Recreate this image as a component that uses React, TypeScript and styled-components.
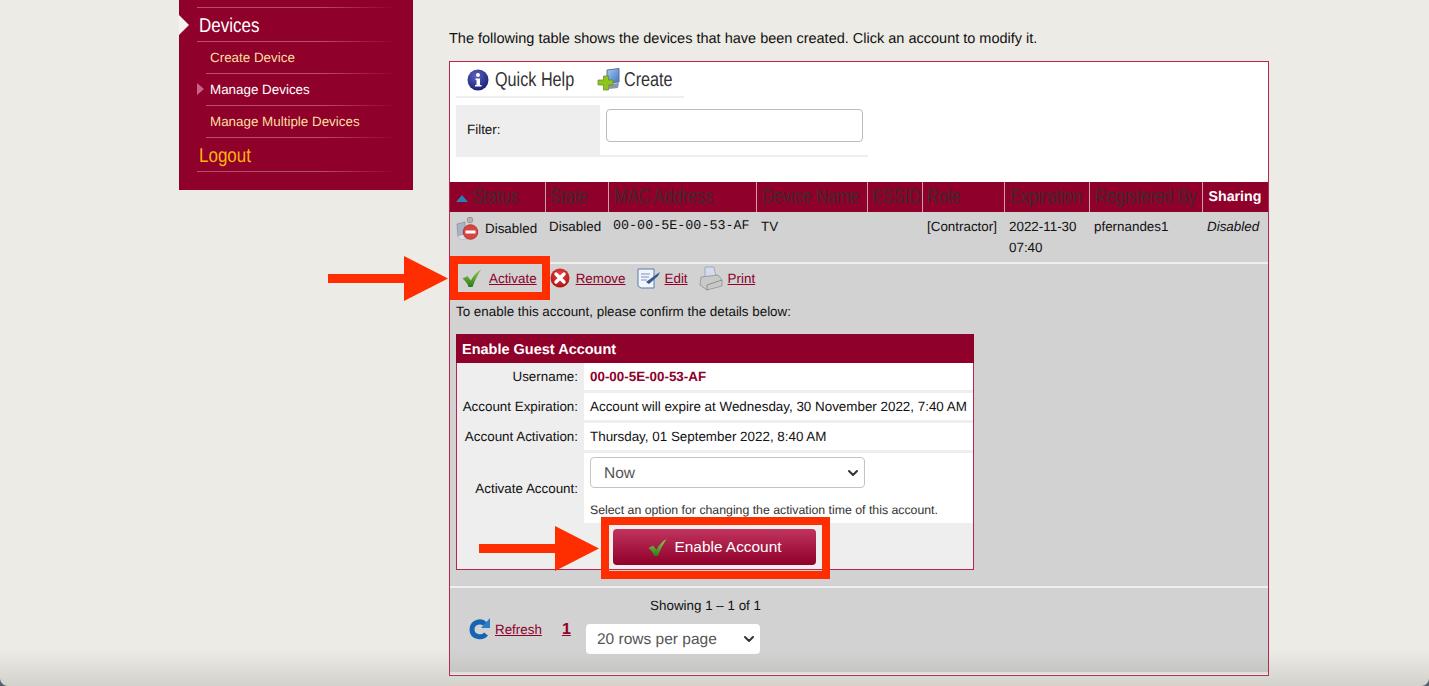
import React from "react";
import styled, { createGlobalStyle } from "styled-components";
import { ChevronDown } from "lucide-react";

const maroon = "#8f002a";
const sans = `"Liberation Sans", Arial, sans-serif`;

const Global = createGlobalStyle`
  html, body { margin: 0; padding: 0; height: 686px; overflow: hidden; background: #ecebe6; }
  body { font-family: ${sans}; font-size: 13.4px; color: #111; text-rendering: geometricPrecision; }
  * { box-sizing: border-box; }
`;

const Page = styled.div`
  position: relative; width: 1429px; height: 686px; overflow: hidden;
  display: flex; align-items: flex-start; padding-left: 179px;
`;
const BottomShade = styled.div`
  position: absolute; left: 0; right: 0; bottom: 0; height: 36px; pointer-events: none;
  background: linear-gradient(to bottom, rgba(120,118,105,0), rgba(120,118,105,.22));
`;
const Corner = styled.div<{ $right?: boolean }>`
  position: absolute; bottom: 0; ${p => (p.$right ? "right: 0" : "left: 0")}; width: 8px; height: 8px;
  background: radial-gradient(circle at ${p => (p.$right ? "0 0" : "100% 0")}, transparent 7.5px, #55606a 8.5px);
`;

/* Condensed display type: the layout box has the narrow width, the glyphs are squeezed to fit it */
const NarrowBox = styled.span<{ $w: number }>`
  display: inline-block; width: ${p => p.$w}px; white-space: nowrap; vertical-align: baseline;
`;
const NarrowInk = styled.span<{ $scale: number }>`
  display: inline-block; transform: scaleX(${p => p.$scale}); transform-origin: 0 50%;
`;
const Narrow = ({ w, scale, children }: { w: number; scale: number; children: React.ReactNode }) => (
  <NarrowBox $w={w}><NarrowInk $scale={scale}>{children}</NarrowInk></NarrowBox>
);

/* Sidebar */
const Side = styled.nav`
  width: 234px; height: 190px; flex: none; background: ${maroon}; position: relative;
  padding-top: 7px; display: flex; flex-direction: column;
`;
const Rule = styled.div<{ $sub?: boolean }>`
  height: 1px; margin-left: ${p => (p.$sub ? 27 : 18)}px; margin-right: 16px;
  background: linear-gradient(to right, #b8506c 0, #b8506c 60%, rgba(184,80,108,0) 100%);
`;
const Notch = styled.div`
  position: absolute; left: 0; top: 15px; width: 0; height: 0;
  border-left: 10px solid #f4f3f0; border-top: 10.5px solid transparent; border-bottom: 10.5px solid transparent;
`;
const SectionLink = styled.a<{ $gold?: boolean }>`
  display: flex; align-items: center; height: 33px; padding: 3px 0 0 20px;
  font-size: 20px; color: ${p => (p.$gold ? "#ffb40f" : "#fff")};
`;
const SubLink = styled.a<{ $active?: boolean }>`
  position: relative; display: flex; align-items: center; height: 31px; padding: 0 0 1px 31px;
  font-size: 13.4px; color: ${p => (p.$active ? "#fff" : "#fbdf9f")};
`;
const ActiveMark = styled.span`
  position: absolute; left: 18px; top: 9px; width: 0; height: 0;
  border-left: 7px solid #c8628a; border-top: 6.5px solid transparent; border-bottom: 6.5px solid transparent;
`;

/* Main */
const Main = styled.main`
  margin-left: 36px; width: 820px; padding-top: 31px; flex: none;
`;
const Intro = styled.p`
  margin: 0 0 13px; font-size: 14.5px; line-height: 17px; color: #111; white-space: nowrap;
`;
const Panel = styled.section`
  border: 1px solid #b8254f; background: #fff; height: 615px; display: flex; flex-direction: column;
`;
const Top = styled.div`
  height: 120px; padding: 6px 0 0 6px; flex: none;
`;
const Tools = styled.div`
  width: 228px; height: 30px; padding-left: 11px; border-bottom: 2px solid #eee;
  display: flex; align-items: flex-start; gap: 24px;
`;
const Tool = styled.a<{ $gap: number }>`
  display: flex; align-items: center; gap: ${p => p.$gap}px; height: 24px;
  font-size: 20px; color: #333;
`;
const FilterRow = styled.div`
  margin-top: 7px; width: 412px; height: 52px; display: flex; border-bottom: 2px solid #eee;
`;
const FilterLabel = styled.label`
  width: 144px; background: #eee; padding: 16px 0 0 11px; font-size: 13.4px; line-height: 17px;
`;
const FilterInput = styled.input`
  margin: 4px 0 0 6px; width: 257px; height: 33px; background: #fff;
  border: 1px solid #bbb; border-radius: 4px; outline: none;
`;

const Table = styled.table`
  width: 818px; table-layout: fixed; border-collapse: collapse; flex: none;
`;
const Th = styled.th<{ $w: number; $white?: boolean; $pad: number }>`
  width: ${p => p.$w}px; height: 30px; padding: 0 0 0 ${p => p.$pad}px; background: ${maroon}; text-align: left; white-space: nowrap;
  border-right: 1px solid #c9a0ab; font-weight: ${p => (p.$white ? 700 : 400)};
  font-size: ${p => (p.$white ? 14.2 : 20.5)}px;
  color: ${p => (p.$white ? "#fff" : "#40282c")};
  &:last-child { border-right: none; }
`;
const SortMark = styled.span`
  display: inline-block; width: 0; height: 0; margin-right: 5px; vertical-align: 1px;
  border-left: 6px solid transparent; border-right: 6px solid transparent; border-bottom: 7px solid #2a7fb5;
`;
const Td = styled.td<{ $mono?: boolean; $italic?: boolean; $pad?: number }>`
  height: 50px; padding: 4px 0 0 ${p => p.$pad ?? 5}px; vertical-align: top; line-height: 21px; background: #d2d2d2;
  font-family: ${p => (p.$mono ? `"Liberation Mono", monospace` : sans)};
  font-size: 13.4px; font-style: ${p => (p.$italic ? "italic" : "normal")};
`;
const StatusCell = styled.div`
  display: flex; align-items: center; gap: 6px; margin: 1px 0 0 1px; font-size: 13.4px;
`;
const Detail = styled.div`
  height: 326px; flex: none; background: #d2d2d2; border-top: 2px solid #efefef; border-bottom: 2px solid #efefef;
  padding: 0 0 0 6px;
`;
const Actions = styled.div`
  height: 30px; margin-top: -1px; padding-left: 6px; display: flex; align-items: center; font-size: 13.4px;
`;
const Action = styled.a<{ $gap: number; $after: number }>`
  display: flex; align-items: center; gap: ${p => p.$gap}px; margin-right: ${p => p.$after}px;
`;
const Link = styled.span`
  color: ${maroon}; text-decoration: underline;
`;
const Note = styled.p`
  margin: 10px 0 14px; font-size: 13.4px; line-height: 17px;
`;
const FormBox = styled.div`
  width: 518px; height: 236px; border: 1px solid #b8254f; background: #eee;
`;
const FormHead = styled.div`
  height: 29px; margin: -1px -1px 0; background: ${maroon}; color: #fff; font-weight: 700; font-size: 14.5px;
  display: flex; align-items: center; padding: 3px 0 0 6px;
`;
const FormRow = styled.div<{ $h: number; $gap?: boolean }>`
  display: grid; grid-template-columns: 127px 1fr; height: ${p => p.$h}px; margin-bottom: ${p => (p.$gap ? 3 : 0)}px;
`;
const FormLabel = styled.div`
  align-self: center; text-align: right; padding-right: 6px; font-size: 13.4px; white-space: nowrap;
`;
const FormValue = styled.div<{ $bold?: boolean }>`
  background: #fff; padding-left: 6px; display: flex; align-items: center; font-size: 13.4px; white-space: nowrap;
  color: ${p => (p.$bold ? maroon : "#111")}; font-weight: ${p => (p.$bold ? 700 : 400)};
`;
const SelectStack = styled.div`
  background: #fff; padding: 4px 0 0 6px;
`;
const SelectBox = styled.div<{ $w: number; $h: number; $plain?: boolean }>`
  position: relative; width: ${p => p.$w}px; height: ${p => p.$h}px; background: #fff; border-radius: 4px;
  border: ${p => (p.$plain ? "none" : "1px solid #c4c4c4")};
  display: flex; align-items: center; padding: 2px 0 0 ${p => (p.$plain ? 11 : 13)}px; font-size: 15.5px; color: #555;
`;
const Caret = styled(ChevronDown)`
  position: absolute; right: 3px; top: 50%; margin-top: -8px; color: #333; stroke-width: 3;
`;
const Help = styled.div`
  margin-top: 14px; font-size: 12.3px; line-height: 16px; color: #333; white-space: nowrap;
`;
const ButtonRow = styled.div`
  display: flex; padding: 6px 0 0 156px;
`;
const EnableButton = styled.button`
  width: 203px; height: 36px; border: none; border-radius: 4px; color: #fff; font-family: ${sans}; font-size: 15.4px;
  background: linear-gradient(to bottom, #c0345e, #8f002a); padding: 0;
  display: flex; align-items: center; justify-content: center; gap: 8px;
`;
const Pager = styled.div`
  flex: 1; background: #d2d2d2; border-bottom: 2px solid #efefef; margin-bottom: 1px;
  display: grid; grid-template-columns: 136px 175px; grid-template-rows: 36px 1fr;
`;
const Showing = styled.div`
  grid-column: 2; justify-self: end; padding: 9px 0 0 0; font-size: 13.4px; line-height: 17px; white-space: nowrap;
`;
const PagerLeft = styled.div`
  grid-row: 1 / span 2; grid-column: 1; display: flex; align-items: flex-start; padding: 29px 0 0 18px;
`;
const RefreshLink = styled.a`
  display: flex; align-items: center; gap: 4px; margin-right: 20px; font-size: 13.4px;
`;
const PageNum = styled.a`
  font-weight: 700; font-size: 16px; color: ${maroon}; text-decoration: underline; line-height: 24px; margin-top: 1px;
`;

/* Annotations drawn over the page */
const Callout = styled.div<{ $x: number; $y: number; $w: number; $h: number }>`
  position: absolute; left: ${p => p.$x}px; top: ${p => p.$y}px; width: ${p => p.$w}px; height: ${p => p.$h}px;
  border: 8px solid #ff2e00; pointer-events: none;
`;
const ArrowMark = styled.svg<{ $x: number; $y: number }>`
  position: absolute; left: ${p => p.$x}px; top: ${p => p.$y}px;
`;

const Arrow = ({ x, y }: { x: number; y: number }) => (
  <ArrowMark $x={x} $y={y} width="120" height="45" viewBox="0 0 120 45">
    <path d="M0 18H76V0L120 22.500L76 45V27H0Z" fill="#ff2e00" />
  </ArrowMark>
);

const Check = ({ s = 20 }: { s?: number }) => (
  <svg width={s} height={s} viewBox="0 0 20 20">
    <defs><linearGradient id="ck" x1="0" y1="0" x2="0" y2="1"><stop offset="0" stopColor="#8fd14f" /><stop offset="1" stopColor="#2a7a1c" /></linearGradient></defs>
    <path d="M0.500 10.500L5.500 8L8.800 12.500C11 8 15 3.500 19.500 1C16 6.500 12.500 13 10.500 19H6.500C5.500 15.500 3.500 13 0.500 10.500Z" fill="url(#ck)" />
  </svg>
);
const InfoIcon = () => (
  <svg width="22" height="22" viewBox="0 0 22 22">
    <defs><radialGradient id="inf" cx=".4" cy=".3" r=".8"><stop offset="0" stopColor="#5a64c0" /><stop offset="1" stopColor="#16186e" /></radialGradient></defs>
    <circle cx="11" cy="11" r="10.500" fill="url(#inf)" />
    <circle cx="11" cy="6" r="2" fill="#fff" />
    <path d="M8.500 9.500H13V16H14.500V17.500H8V16H9.500V11H8.500Z" fill="#fff" />
  </svg>
);
const CreateIcon = () => (
  <svg width="24" height="24" viewBox="0 0 24 24">
    <defs><linearGradient id="scr" x1="0" y1="0" x2="1" y2="1"><stop offset="0" stopColor="#a9cdf2" /><stop offset="1" stopColor="#3f74c0" /></linearGradient></defs>
    <path d="M10 2L22 0.500V14L10 15Z" fill="url(#scr)" stroke="#5a6f95" />
    <path d="M12 16L22 15L21 20L12 21Z" fill="#8a95b0" />
    <path d="M6.500 8H11.500V12H16V17H11.500V22H6.500V17H1V12H6.500Z" fill="#8fc31f" stroke="#5f8a1a" strokeWidth=".7" />
  </svg>
);
const DisabledIcon = () => (
  <svg width="23" height="23" viewBox="0 0 23 23">
    <path d="M1 7L9 5V17L2 19Z" fill="#aab3c6" stroke="#7b8090" strokeWidth=".6" />
    <circle cx="14" cy="3" r="2.800" fill="#c0b0b0" stroke="#777" strokeWidth=".6" />
    <path d="M1 19L9 17L14 21L5 23Z" fill="#dcdce2" stroke="#999" strokeWidth=".4" />
    <circle cx="14.500" cy="15" r="7.300" fill="#d8443e" stroke="#a82a28" strokeWidth=".8" />
    <rect x="9.500" y="13.500" width="10" height="3" fill="#fff" />
  </svg>
);
const RemoveIcon = () => (
  <svg width="20" height="20" viewBox="0 0 20 20">
    <defs><radialGradient id="rm" cx=".5" cy=".35" r=".7"><stop offset="0" stopColor="#e84a3f" /><stop offset="1" stopColor="#a80f10" /></radialGradient></defs>
    <circle cx="10" cy="10" r="9.500" fill="url(#rm)" />
    <path d="M6 6L14 14M14 6L6 14" stroke="#fff" strokeWidth="3.400" strokeLinecap="round" />
  </svg>
);
const EditIcon = () => (
  <svg width="24" height="24" viewBox="0 0 24 24">
    <path d="M1 3H17V22H4L1 20Z" fill="#f2f5fb" stroke="#5c7ba8" />
    <path d="M4 8H13M4 11H12M4 14H10" stroke="#7a93bb" strokeWidth="1.200" />
    <path d="M9 16L20 8L23 6L21 10L12 18Z" fill="#34588f" />
  </svg>
);
const PrintIcon = () => (
  <svg width="24" height="25" viewBox="0 0 24 25">
    <path d="M6 1H15L17 11H6Z" fill="#d4dcec" stroke="#8e99ae" strokeWidth=".7" />
    <path d="M2 11L19 9L23 14V20L8 24L1 19Z" fill="#c8caca" stroke="#888" strokeWidth=".7" />
    <path d="M8 24V19L23 14" fill="none" stroke="#777" strokeWidth=".7" />
  </svg>
);
const RefreshIcon = () => (
  <svg width="23" height="24" viewBox="0 0 23 24">
    <path d="M17 7C13 3 4 5 4 12.500C4 20 14 22 18 17" fill="none" stroke="#1664b4" strokeWidth="5" />
    <path d="M22 1V11H13Z" fill="#2a7ec8" />
  </svg>
);

const columns: { name: string; w: number; ink: number; pad: number }[] = [
  { name: "Status", w: 95, ink: 45, pad: 6 },
  { name: "State", w: 63, ink: 38, pad: 4 },
  { name: "MAC Address", w: 148, ink: 99, pad: 5 },
  { name: "Device Name", w: 111, ink: 96, pad: 5 },
  { name: "ESSID", w: 55, ink: 44, pad: 4 },
  { name: "Role", w: 82, ink: 32, pad: 4 },
  { name: "Expiration", w: 85, ink: 72, pad: 5 },
  { name: "Registered By", w: 113, ink: 100, pad: 5 },
];

export default function App() {
  return (
    <Page>
      <Global />
      <Side>
        <Notch />
        <Rule />
        <SectionLink><Narrow w={60} scale={0.85}>Devices</Narrow></SectionLink>
        <Rule />
        <SubLink>Create Device</SubLink>
        <Rule $sub />
        <SubLink $active><ActiveMark />Manage Devices</SubLink>
        <Rule $sub />
        <SubLink>Manage Multiple Devices</SubLink>
        <Rule $sub />
        <SectionLink $gold><Narrow w={52} scale={0.85}>Logout</Narrow></SectionLink>
        <Rule />
      </Side>
      <Main>
        <Intro>The following table shows the devices that have been created. Click an account to modify it.</Intro>
        <Panel>
          <Top>
            <Tools>
              <Tool $gap={6}><InfoIcon /><Narrow w={78} scale={0.81}>Quick Help</Narrow></Tool>
              <Tool $gap={3}><CreateIcon /><Narrow w={48} scale={0.81}>Create</Narrow></Tool>
            </Tools>
            <FilterRow>
              <FilterLabel>Filter:</FilterLabel>
              <FilterInput />
            </FilterRow>
          </Top>
          <Table>
            <thead>
              <tr>
                {columns.map((c, i) => (
                  <Th key={c.name} $w={c.w} $pad={c.pad}>
                    {i === 0 && <SortMark />}<Narrow w={c.ink} scale={0.79}>{c.name}</Narrow>
                  </Th>
                ))}
                <Th $w={66} $pad={6} $white>Sharing</Th>
              </tr>
            </thead>
            <tbody>
              <tr>
                <Td><StatusCell><DisabledIcon />Disabled</StatusCell></Td>
                <Td $pad={4}>Disabled</Td>
                <Td $mono>00-00-5E-00-53-AF</Td>
                <Td>TV</Td>
                <Td />
                <Td>[Contractor]</Td>
                <Td>2022-11-30 07:40</Td>
                <Td>pfernandes1</Td>
                <Td $italic>Disabled</Td>
              </tr>
            </tbody>
          </Table>
          <Detail>
            <Actions>
              <Action $gap={7} $after={13}><Check /><Link>Activate</Link></Action>
              <Action $gap={6} $after={11}><RemoveIcon /><Link>Remove</Link></Action>
              <Action $gap={4} $after={11}><EditIcon /><Link>Edit</Link></Action>
              <Action $gap={5} $after={0}><PrintIcon /><Link>Print</Link></Action>
            </Actions>
            <Note>To enable this account, please confirm the details below:</Note>
            <FormBox>
              <FormHead>Enable Guest Account</FormHead>
              <FormRow $h={27} $gap><FormLabel>Username:</FormLabel><FormValue $bold>00-00-5E-00-53-AF</FormValue></FormRow>
              <FormRow $h={27} $gap><FormLabel>Account Expiration:</FormLabel><FormValue>Account will expire at Wednesday, 30 November 2022, 7:40 AM</FormValue></FormRow>
              <FormRow $h={27} $gap><FormLabel>Account Activation:</FormLabel><FormValue>Thursday, 01 September 2022, 8:40 AM</FormValue></FormRow>
              <FormRow $h={70}>
                <FormLabel>Activate Account:</FormLabel>
                <SelectStack>
                  <SelectBox $w={275} $h={31}>Now<Caret size={16} /></SelectBox>
                  <Help>Select an option for changing the activation time of this account.</Help>
                </SelectStack>
              </FormRow>
              <ButtonRow><EnableButton><Check s={19} />Enable Account</EnableButton></ButtonRow>
            </FormBox>
          </Detail>
          <Pager>
            <PagerLeft>
              <RefreshLink><RefreshIcon /><Link>Refresh</Link></RefreshLink>
              <PageNum>1</PageNum>
            </PagerLeft>
            <Showing>Showing 1 – 1 of 1</Showing>
            <SelectBox $w={174} $h={30} $plain>20 rows per page<Caret size={16} /></SelectBox>
          </Pager>
        </Panel>
      </Main>
      <Callout $x={450} $y={256} $w={100} $h={44} />
      <Callout $x={601} $y={517} $w={229} $h={62} />
      <Arrow x={328} y={256} />
      <Arrow x={479} y={526} />
      <BottomShade />
      <Corner />
      <Corner $right />
    </Page>
  );
}
